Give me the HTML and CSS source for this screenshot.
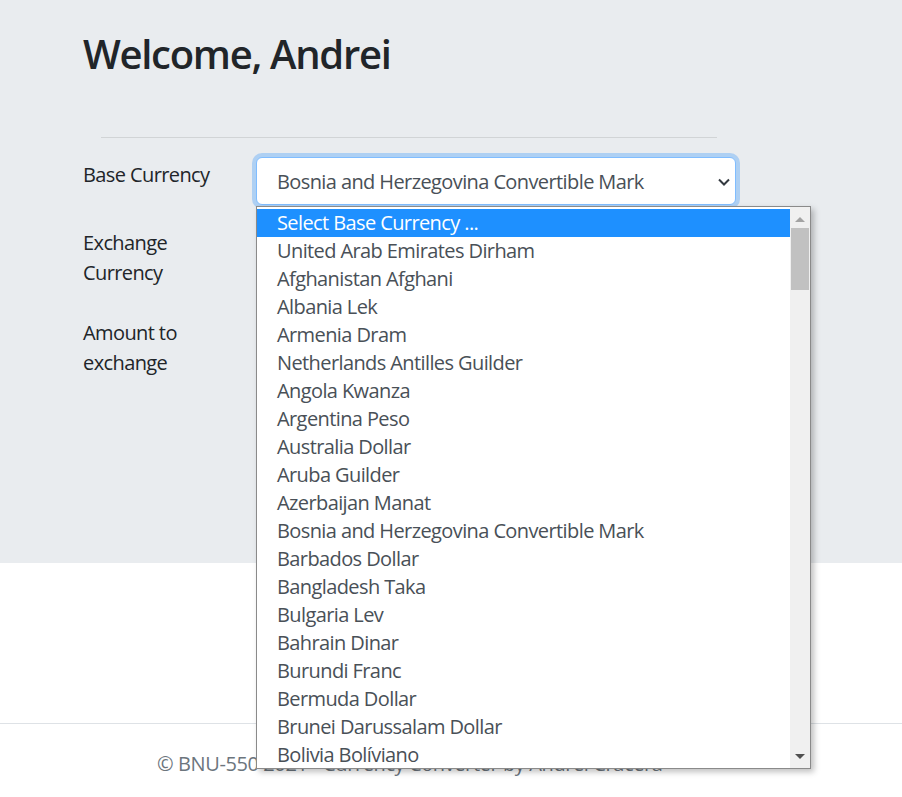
FILE: index.html
```html
<!DOCTYPE html>
<html lang="en">
<head>
<meta charset="utf-8">
<title>Currency Converter</title>
<link rel="stylesheet" href="styles.css">
</head>
<body>
<main class="jumbo">
  <h1 class="title">Welcome, Andrei</h1>
  <hr class="divider">
  <form class="form">
    <div class="form-row">
      <label class="form-label">Base Currency</label>
      <div class="field">
        <div class="select-wrap">
          <div class="select focused">
            <span class="select-text">Bosnia and Herzegovina Convertible Mark</span>
            <svg class="chevron" width="12" height="8" viewBox="0 0 12 8"><path d="M1 1.5l5 5 5-5" fill="none" stroke="#343a40" stroke-width="2"/></svg>
          </div>
          <div class="popup">
            <ul class="options">
              <li class="option active">Select Base Currency ...</li>
              <li class="option">United Arab Emirates Dirham</li>
              <li class="option">Afghanistan Afghani</li>
              <li class="option">Albania Lek</li>
              <li class="option">Armenia Dram</li>
              <li class="option">Netherlands Antilles Guilder</li>
              <li class="option">Angola Kwanza</li>
              <li class="option">Argentina Peso</li>
              <li class="option">Australia Dollar</li>
              <li class="option">Aruba Guilder</li>
              <li class="option">Azerbaijan Manat</li>
              <li class="option">Bosnia and Herzegovina Convertible Mark</li>
              <li class="option">Barbados Dollar</li>
              <li class="option">Bangladesh Taka</li>
              <li class="option">Bulgaria Lev</li>
              <li class="option">Bahrain Dinar</li>
              <li class="option">Burundi Franc</li>
              <li class="option">Bermuda Dollar</li>
              <li class="option">Brunei Darussalam Dollar</li>
              <li class="option">Bolivia Bolíviano</li>
            </ul>
            <div class="scrollbar">
              <span class="arrow up"></span>
              <span class="thumb"></span>
              <span class="arrow down"></span>
            </div>
          </div>
        </div>
      </div>
    </div>
    <div class="form-row">
      <label class="form-label">Exchange Currency</label>
      <div class="field"></div>
    </div>
    <div class="form-row">
      <label class="form-label">Amount to exchange</label>
      <div class="field"></div>
    </div>
  </form>
</main>
<footer class="footer">
  <p class="footer-text">© BNU-550 2021 - Currency Converter by Andrei Cracera</p>
</footer>
</body>
</html>
```

FILE: styles.css
```css
* { box-sizing: border-box; }
html, body { margin: 0; padding: 0; }
body {
  font-family: "Open Sans", "Noto Sans", sans-serif;
  font-size: 20px;
  line-height: 30px;
  color: #212529;
  background: #fff;
  letter-spacing: -0.6px;
}
.jumbo {
  background: #e9ecef;
  height: 563px;
  padding: 30px 0 0 83px;
}
.title {
  margin: 0;
  font-size: 40px;
  line-height: 48px;
  font-weight: 600;
  letter-spacing: -1.3px;
}
.divider {
  margin: 59px 0 0 18px;
  width: 616px;
  border: 0;
  border-top: 1px solid rgba(0,0,0,0.1);
  height: 0;
}
.form { margin-top: 19px; }
.form-row {
  display: flex;
  margin-bottom: 20px;
}
.form-label {
  width: 142px;
  flex: none;
  padding: 3px 0 7px;
  margin-right: 31px;
}
.field { width: 480px; min-height: 48px; }
.select-wrap { position: relative; }
.select {
  height: 48px;
  border: 1px solid #80bdff;
  border-radius: 6px;
  background: #fff;
  color: #495057;
  padding: 8px 5px 8px 20px;
  display: flex;
  align-items: center;
  justify-content: space-between;
  box-shadow: 0 0 0 4px rgba(0,123,255,0.25);
}
.select-text { padding-top: 2px; }
.chevron { flex: none; margin-top: 2px; }
.popup {
  position: absolute;
  left: 0;
  top: 49px;
  width: 555px;
  height: 563px;
  border: 1px solid #8a8a8a;
  background: #fff;
  display: flex;
  box-shadow: 3px 3px 6px rgba(0,0,0,0.25);
  z-index: 10;
}
.options {
  list-style: none;
  margin: 0;
  padding: 2px 0 0;
  flex: 1;
  overflow: hidden;
}
.option {
  height: 28px;
  line-height: 28px;
  padding-left: 20px;
  color: #495057;
  white-space: nowrap;
}
.option.active { background: #1e90ff; color: #fff; }
.scrollbar {
  width: 20px;
  background: #f0f0f0;
  position: relative;
  flex: none;
}
.thumb {
  position: absolute;
  left: 1px;
  right: 1px;
  top: 21px;
  height: 62px;
  background: #c1c1c1;
}
.arrow {
  position: absolute;
  left: 5px;
  width: 0;
  height: 0;
  border-left: 5px solid transparent;
  border-right: 5px solid transparent;
}
.arrow.up { top: 10px; border-bottom: 5px solid #a3a3a3; }
.arrow.down { bottom: 9px; border-top: 5px solid #505050; }
.footer {
  margin-top: 160px;
  border-top: 1px solid #dee2e6;
  padding: 25px 0 0 157px;
}
.footer-text { margin: 0; color: #6c757d; letter-spacing: -0.4px; }
```
